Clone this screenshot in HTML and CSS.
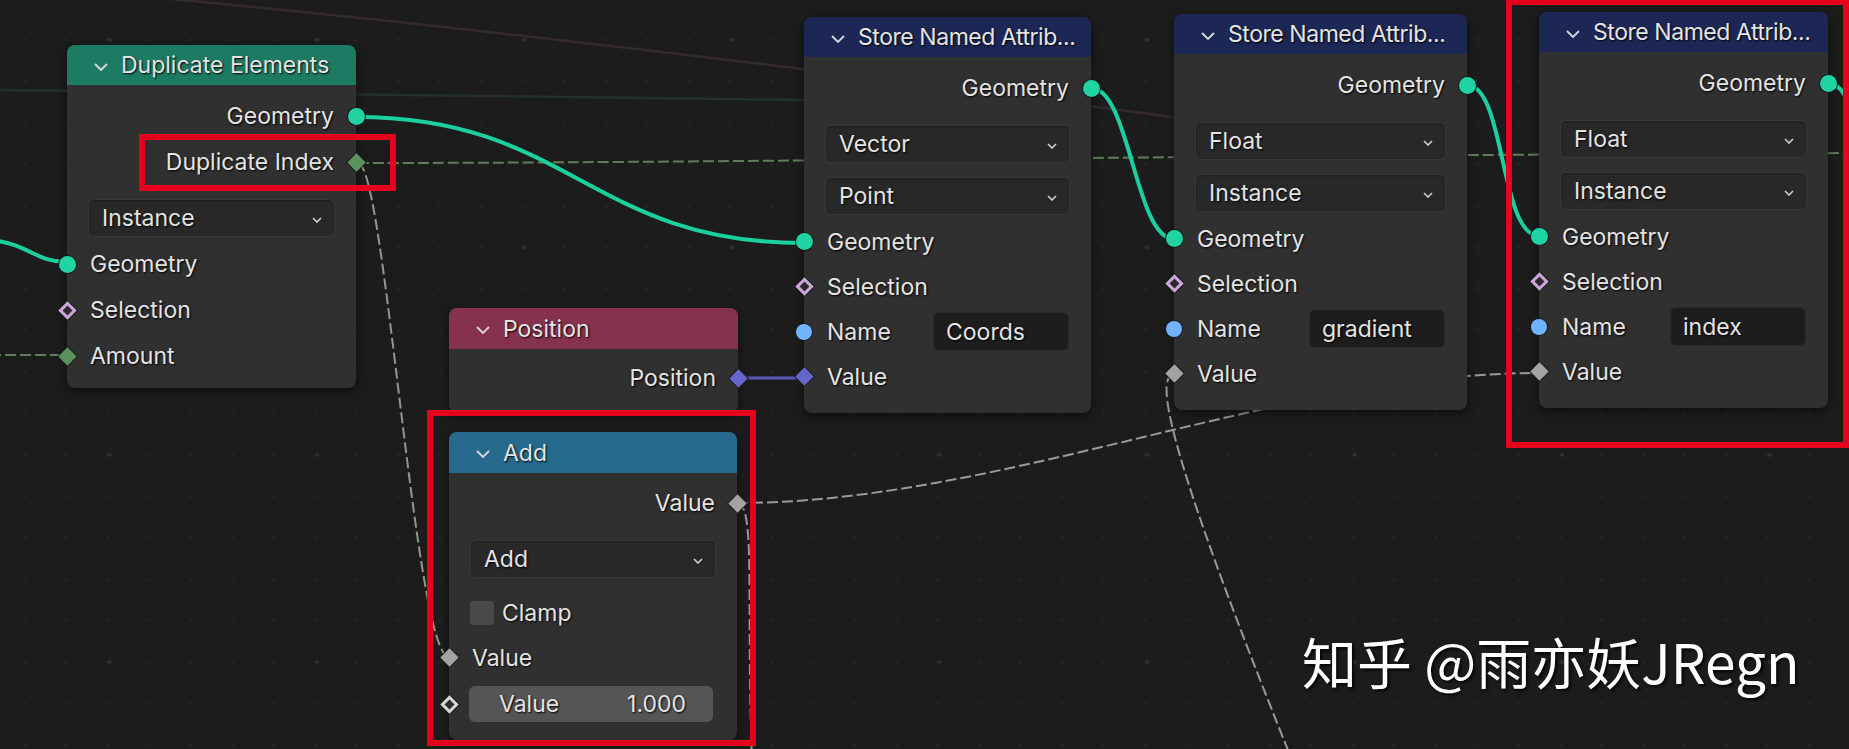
FILE: index.html
```html
<!DOCTYPE html>
<html>
<head>
<meta charset="utf-8">
<link rel="stylesheet" href="styles.css">
</head>
<body>
<div class="canvas">
  <svg class="wires" width="1849" height="749" viewBox="0 0 1849 749">
    <path class="faint-red" d="M140 -4 C 500 30, 900 80, 1180 118"/>
    <path class="faint-teal" d="M0 90 C 300 92, 600 96, 810 100"/>
    <path class="dash-int" d="M358 163 C 700 163, 1100 156, 1860 153"/>
    <path class="dash-int" d="M-10 355 L 67 355"/>
    <path class="dash-mix" d="M358 163 C 385 163, 415 657, 449 657"/>
    <path class="dash-val" d="M737 503 C 1000 503, 1280 373, 1539 373"/>
    <path class="dash-val" d="M737 503 C 756 503, 746 600, 752 760"/>
    <path class="dash-val" d="M1174 375 C 1152 375, 1175 470, 1292 760"/>
    <path class="vec" d="M738 378 L 804 378"/>
    <path class="geo" d="M-10 240 C 30 244, 35 262, 67 262"/>
    <path class="geo" d="M356 117 C 570 117, 590 243, 804 243"/>
    <path class="geo" d="M1091 88 C 1130 88, 1135 239, 1174 239"/>
    <path class="geo" d="M1467 85 C 1505 85, 1500 236, 1539 236"/>
    <path class="geo" d="M1828 83 C 1842 83, 1848 100, 1856 125"/>
  </svg>

  <div class="node dup">
    <div class="hdr hdr-geo"><svg class="chev" viewBox="0 0 14 8"><polyline points="1,1 7,7 13,1"/></svg><span class="title">Duplicate Elements</span></div>
    <div class="body">
      <div class="row out"><span>Geometry</span><i class="sock geo-s r"></i></div>
      <div class="row out"><span>Duplicate Index</span><i class="sock dia int r"></i></div>
      <div class="dd dd-first">Instance<svg class="ddc" viewBox="0 0 10 6"><polyline points="1,1 5,5 9,1"/></svg></div>
      <div class="row in tall"><i class="sock geo-s l"></i><span>Geometry</span></div>
      <div class="row in tall"><i class="sock dia sel l"></i><span>Selection</span></div>
      <div class="row in tall"><i class="sock dia int l"></i><span>Amount</span></div>
    </div>
  </div>

  <div class="node sna1">
    <div class="hdr hdr-attr"><svg class="chev" viewBox="0 0 14 8"><polyline points="1,1 7,7 13,1"/></svg><span class="title narrow">Store Named Attrib...</span></div>
    <div class="body sna-body">
      <div class="row out"><span>Geometry</span><i class="sock geo-s r"></i></div>
      <div class="dd dd-first">Vector<svg class="ddc" viewBox="0 0 10 6"><polyline points="1,1 5,5 9,1"/></svg></div>
      <div class="dd dd-next">Point<svg class="ddc" viewBox="0 0 10 6"><polyline points="1,1 5,5 9,1"/></svg></div>
      <div class="row in"><i class="sock geo-s l"></i><span>Geometry</span></div>
      <div class="row in"><i class="sock dia sel l"></i><span>Selection</span></div>
      <div class="row in"><i class="sock str l"></i><span>Name</span><span class="field">Coords</span></div>
      <div class="row in"><i class="sock dia vecs l"></i><span>Value</span></div>
    </div>
  </div>

  <div class="node sna2">
    <div class="hdr hdr-attr"><svg class="chev" viewBox="0 0 14 8"><polyline points="1,1 7,7 13,1"/></svg><span class="title narrow">Store Named Attrib...</span></div>
    <div class="body sna-body">
      <div class="row out"><span>Geometry</span><i class="sock geo-s r"></i></div>
      <div class="dd dd-first">Float<svg class="ddc" viewBox="0 0 10 6"><polyline points="1,1 5,5 9,1"/></svg></div>
      <div class="dd dd-next">Instance<svg class="ddc" viewBox="0 0 10 6"><polyline points="1,1 5,5 9,1"/></svg></div>
      <div class="row in"><i class="sock geo-s l"></i><span>Geometry</span></div>
      <div class="row in"><i class="sock dia sel l"></i><span>Selection</span></div>
      <div class="row in"><i class="sock str l"></i><span>Name</span><span class="field">gradient</span></div>
      <div class="row in"><i class="sock dia val l"></i><span>Value</span></div>
    </div>
  </div>

  <div class="node sna3">
    <div class="hdr hdr-attr"><svg class="chev" viewBox="0 0 14 8"><polyline points="1,1 7,7 13,1"/></svg><span class="title narrow">Store Named Attrib...</span></div>
    <div class="body sna-body">
      <div class="row out"><span>Geometry</span><i class="sock geo-s r"></i></div>
      <div class="dd dd-first">Float<svg class="ddc" viewBox="0 0 10 6"><polyline points="1,1 5,5 9,1"/></svg></div>
      <div class="dd dd-next">Instance<svg class="ddc" viewBox="0 0 10 6"><polyline points="1,1 5,5 9,1"/></svg></div>
      <div class="row in"><i class="sock geo-s l"></i><span>Geometry</span></div>
      <div class="row in"><i class="sock dia sel l"></i><span>Selection</span></div>
      <div class="row in"><i class="sock str l"></i><span>Name</span><span class="field">index</span></div>
      <div class="row in"><i class="sock dia val l"></i><span>Value</span></div>
    </div>
  </div>

  <div class="node pos">
    <div class="hdr hdr-input"><svg class="chev" viewBox="0 0 14 8"><polyline points="1,1 7,7 13,1"/></svg><span class="title">Position</span></div>
    <div class="body pos-body">
      <div class="row out"><span>Position</span><i class="sock dia vecs r"></i></div>
    </div>
  </div>

  <div class="node add">
    <div class="hdr hdr-conv"><svg class="chev" viewBox="0 0 14 8"><polyline points="1,1 7,7 13,1"/></svg><span class="title">Add</span></div>
    <div class="body add-body">
      <div class="row out"><span>Value</span><i class="sock dia val r"></i></div>
      <div class="dd dd-first">Add<svg class="ddc" viewBox="0 0 10 6"><polyline points="1,1 5,5 9,1"/></svg></div>
      <div class="row check-row"><span class="check"></span><span>Clamp</span></div>
      <div class="row in"><i class="sock dia val l"></i><span>Value</span></div>
      <div class="slider"><i class="sock dia hollow l2"></i><span>Value</span><span>1.000</span></div>
    </div>
  </div>

  <div class="redbox rb-dup"></div>
  <div class="redbox rb-sna"></div>
  <div class="redbox rb-add"></div>

  <div class="watermark">知乎 @雨亦妖JRegn</div>
</div>
</body>
</html>
```

FILE: styles.css
```css
html, body {
  margin: 0;
  padding: 0;
  background: #1d1d1d;
}
.canvas {
  position: relative;
  width: 1849px;
  height: 749px;
  overflow: hidden;
  background-color: #1c1c1c;
  background-image:
    radial-gradient(circle, #303030 1.6px, transparent 2.2px),
    radial-gradient(circle, #262626 1.2px, transparent 1.8px);
  background-size: 207.5px 207.5px, 41.5px 41.5px;
  background-position: 6px -64px, 4px 19px;
  font-family: Inter, "DejaVu Sans", sans-serif;
  font-size: 23px;
  color: #e4e4e4;
}
.wires {
  position: absolute;
  left: 0;
  top: 0;
}
.wires path { fill: none; }
.wires .geo { stroke: #1ccf9e; stroke-width: 4; }
.wires .vec { stroke: #5a5ab8; stroke-width: 3; }
.wires .dash-int { stroke: #5f7f5a; stroke-width: 2; stroke-dasharray: 11 4; }
.wires .dash-mix { stroke: #8b9a8a; stroke-width: 2; stroke-dasharray: 11 4; }
.wires .dash-val { stroke: #9a9a9a; stroke-width: 2; stroke-dasharray: 11 4; }
.wires .faint-red { stroke: #352a2c; stroke-width: 2.5; }
.wires .faint-teal { stroke: #23302d; stroke-width: 2.5; }

.node {
  position: absolute;
  background: #303030;
  border-radius: 8px;
  box-shadow: 0 3px 10px rgba(0,0,0,0.55);
  text-shadow: 1px 1px 2px #000;
}
.dup { left: 67px; top: 45px; width: 289px; }
.sna1 { left: 804px; top: 17px; width: 287px; }
.sna2 { left: 1174px; top: 14px; width: 293px; }
.sna3 { left: 1539px; top: 12px; width: 289px; }
.pos { left: 449px; top: 308px; width: 289px; }
.add { left: 449px; top: 432px; width: 288px; }

.hdr {
  height: 40px;
  border-radius: 8px 8px 0 0;
  display: flex;
  align-items: center;
  padding: 0 4px 0 27px;
  box-sizing: border-box;
  white-space: nowrap;
}
.hdr-geo { background: #1e7b63; }
.hdr-attr { background: #1c2756; }
.hdr-input { background: #86324f; height: 41px; }
.hdr-conv { background: #256a8d; height: 41px; }
.chev {
  width: 14px;
  height: 8px;
  flex: none;
  margin-right: 13px;
  margin-top: 3px;
}
.chev polyline { fill: none; stroke: #d8d8d8; stroke-width: 1.8; }
.title {
  white-space: nowrap;
}
.title.narrow {
  letter-spacing: -0.45px;
}

.body {
  display: flex;
  flex-direction: column;
  padding: 8px 0 9px;
}
.sna-body { padding-bottom: 14px; }
.pos-body { padding: 6px 0 12px; }
.add-body { padding: 7px 0 18px; }

.row {
  position: relative;
  height: 45px;
  display: flex;
  align-items: center;
  padding: 0 22px 0 23px;
  box-sizing: border-box;
}
.row.out { height: 46px; justify-content: flex-end; padding: 0 22px; }
.row.tall { height: 46px; }

.sock {
  position: absolute;
  top: 50%;
  box-sizing: border-box;
}
.sock.r { right: 0; }
.sock.l { left: 0; }
.geo-s {
  width: 17px;
  height: 17px;
  margin-top: -8.5px;
  border-radius: 50%;
  background: #1fd3a2;
  box-shadow: 0 0 0 1px #1a1a1a;
}
.geo-s.r { right: -8.5px; }
.geo-s.l { left: -8.5px; }
.str {
  width: 16px;
  height: 16px;
  margin-top: -8px;
  left: -8px !important;
  border-radius: 50%;
  background: #72b3ff;
  box-shadow: 0 0 0 1px #1a1a1a;
}
.dia {
  width: 13px;
  height: 13px;
  margin-top: -6.5px;
  transform: rotate(45deg);
  box-shadow: 0 0 0 1px #1a1a1a;
}
.dia.r { right: -6.5px; }
.dia.l { left: -6.5px; }
.int { background: #5b935d; }
.vecs { background: #6565cc; }
.val { background: #a3a3a3; }
.sel {
  background: #2b2b2b;
  border: 3.5px solid #cfa6dc;
}
.hollow {
  background: #2b2b2b;
  border: 3.5px solid #d6d6d6;
}

.dd {
  height: 38px;
  margin: 0 21px 0 21px;
  background: #282828;
  border: 1px solid #383838;
  border-radius: 6px;
  box-sizing: border-box;
  display: flex;
  align-items: center;
  justify-content: space-between;
  padding: 0 12px 0 13px;
  box-shadow: inset 0 1px 2px rgba(0,0,0,0.3);
}
.dd-first { margin-top: 14px; }
.dd-next { margin-top: 14px; }
.dd + .row { margin-top: 4px; }
.ddc { width: 10px; height: 6px; margin-top: 3px; }
.ddc polyline { fill: none; stroke: #d0d0d0; stroke-width: 1.6; }

.field {
  margin-left: auto;
  width: 136px;
  height: 39px;
  box-sizing: border-box;
  background: #1d1d1d;
  border: 1px solid #2a2a2a;
  border-radius: 6px;
  display: flex;
  align-items: center;
  padding-left: 12px;
}

.check-row { margin-top: 12px; padding-left: 21px; }
.dd + .check-row { margin-top: 12px; }
.check {
  width: 24px;
  height: 24px;
  border-radius: 3px;
  background: #4a4a4a;
  margin-right: 8px;
}
.slider {
  position: relative;
  margin: 6px 24px 0 20px;
  height: 36px;
  border-radius: 6px;
  background: #555555;
  display: flex;
  align-items: center;
  justify-content: space-between;
  padding: 0 27px 0 30px;
}
.sock.l2 { left: -26.5px; }

.redbox {
  position: absolute;
  border: 6px solid #e6001b;
  box-sizing: border-box;
}
.rb-dup { left: 139px; top: 134px; width: 257px; height: 57px; }
.rb-sna { left: 1506px; top: -1px; width: 343px; height: 449px; }
.rb-add { left: 427px; top: 410px; width: 329px; height: 336px; }

.watermark {
  position: absolute;
  left: 1302px;
  top: 630px;
  font-family: "Noto Sans CJK SC", "Noto Sans", sans-serif;
  font-size: 55px;
  line-height: 1.1;
  color: #ffffff;
  text-shadow: 2px 2px 3px rgba(0,0,0,0.8);
  white-space: nowrap;
}
```
